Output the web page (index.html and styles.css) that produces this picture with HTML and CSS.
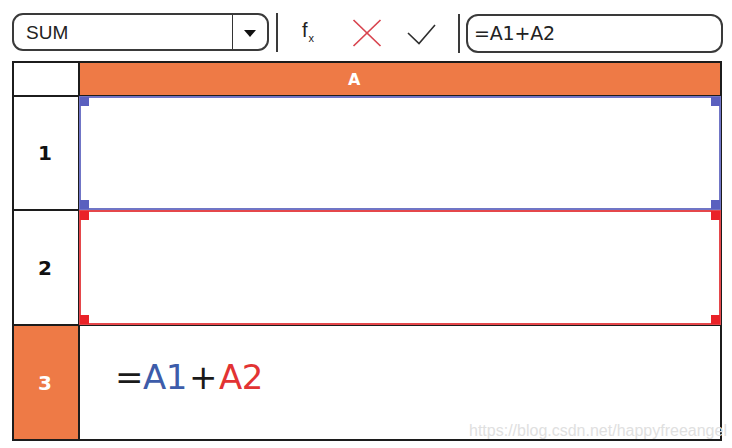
FILE: index.html
```html
<!DOCTYPE html>
<html>
<head>
<meta charset="utf-8">
<link rel="stylesheet" href="styles.css">
</head>
<body>
<div class="toolbar">
  <div class="namebox">
    <div class="name">SUM</div>
    <div class="drop"><span class="tri"></span></div>
  </div>
  <div class="sep sep1"></div>
  <div class="fx">f<span class="sub">x</span></div>
  <svg class="cancel" width="30" height="28" viewBox="0 0 30 28">
    <line x1="1.5" y1="1" x2="28.5" y2="27" stroke="#d8444f" stroke-width="1.7"/>
    <line x1="28.5" y1="1" x2="1.5" y2="27" stroke="#d8444f" stroke-width="1.7"/>
  </svg>
  <svg class="ok" width="32" height="22" viewBox="0 0 32 22">
    <polyline points="2,10 13,20.5 29,2" fill="none" stroke="#2e2e2e" stroke-width="1.6"/>
  </svg>
  <div class="sep sep2"></div>
  <div class="formula">=A1+A2</div>
</div>

<div class="sheet">
  <div class="cell corner"></div>
  <div class="cell colhead"><span class="colname">A</span></div>

  <div class="cell rowhead">1</div>
  <div class="cell data">
    <div class="sel sel-blue">
      <i class="h tl"></i><i class="h tr"></i><i class="h bl"></i><i class="h br"></i>
    </div>
  </div>

  <div class="cell rowhead">2</div>
  <div class="cell data">
    <div class="sel sel-red">
      <i class="h tl"></i><i class="h tr"></i><i class="h bl"></i><i class="h br"></i>
    </div>
  </div>

  <div class="cell rowhead active">3</div>
  <div class="cell data">
    <div class="expr"><span class="op">=</span><span class="ref1">A1</span><span class="op plus">+</span><span class="ref2">A2</span></div>
    <div class="mark">https://blog.csdn.net/happyfreeangel</div>
  </div>
</div>
</body>
</html>
```

FILE: styles.css
```css
html, body {
  margin: 0;
  padding: 0;
  background: #ffffff;
}

body {
  width: 732px;
  height: 448px;
  overflow: hidden;
  font-family: "Liberation Sans", Arial, sans-serif;
  color: #1a1a1a;
}

.toolbar {
  display: flex;
  align-items: flex-start;
  margin-top: 13px;
  height: 40px;
}

.namebox {
  margin-left: 12px;
  width: 257px;
  height: 38px;
  box-sizing: border-box;
  border: 2px solid #3a3a3a;
  border-radius: 11px;
  display: flex;
}

.name {
  flex: 1;
  padding-left: 12px;
  font-size: 19px;
  line-height: 35px;
  color: #222;
}

.drop {
  width: 34px;
  border-left: 1px solid #333;
  display: flex;
  align-items: center;
  justify-content: center;
}

.tri {
  width: 0;
  height: 0;
  border-left: 6px solid transparent;
  border-right: 6px solid transparent;
  border-top: 7px solid #111;
  margin-top: 2px;
}

.sep {
  width: 2px;
  height: 39px;
  background: #3a3a3a;
}

.sep1 {
  margin-left: 7px;
}

.fx {
  margin-left: 24px;
  width: 14px;
  margin-top: 5px;
  font-size: 20px;
  line-height: 24px;
  color: #222;
}

.fx .sub {
  font-size: 11px;
  vertical-align: -5px;
  margin-left: 1px;
}

.cancel {
  margin-left: 36px;
  margin-top: 6px;
}

.ok {
  margin-left: 24px;
  margin-top: 10px;
}

.sep2 {
  margin-left: 20px;
  margin-top: 1px;
}

.formula {
  margin-left: 6px;
  margin-top: 1px;
  width: 257px;
  height: 39px;
  box-sizing: border-box;
  border: 2px solid #3a3a3a;
  border-radius: 12px;
  padding-left: 6px;
  font-family: "DejaVu Sans", sans-serif;
  font-size: 19px;
  line-height: 35px;
  letter-spacing: -0.2px;
  color: #222;
}

.sheet {
  margin-top: 8px;
  margin-left: 12px;
  width: 710px;
  box-sizing: border-box;
  padding: 2px;
  background: #1c1c1c;
  display: grid;
  grid-template-columns: 64px 640px;
  grid-template-rows: 32px 112px 113px 113px;
  gap: 2px;
}

.cell {
  background: #ffffff;
  display: flex;
  align-items: center;
  justify-content: center;
  position: relative;
}

.colhead {
  background: #ee7a46;
  color: #ffffff;
  font-family: "DejaVu Sans", sans-serif;
  font-weight: bold;
  font-size: 16px;
  justify-content: flex-start;
}

.colname {
  margin-left: 268px;
}

.rowhead {
  font-family: "DejaVu Sans", sans-serif;
  font-weight: bold;
  font-size: 20px;
  color: #111;
  padding-right: 2px;
}

.rowhead.active {
  background: #ee7a46;
  color: #ffffff;
}

.data {
  justify-content: flex-start;
}

.sel {
  position: absolute;
  top: -1px;
  left: -1px;
  right: -1px;
  bottom: -1px;
  box-sizing: border-box;
  border: 2px solid;
}

.sel-blue {
  border-color: #7075c6;
}

.sel-red {
  border-color: #e5474b;
}

.h {
  position: absolute;
  width: 9px;
  height: 9px;
}

.sel-blue .h {
  background: #5a60bf;
}

.sel-red .h {
  background: #ea2228;
}

.h.tl { top: -1px; left: -1px; }
.h.tr { top: -1px; right: -1px; }
.h.bl { bottom: -1px; left: -1px; }
.h.br { bottom: -1px; right: -1px; }

.expr {
  margin-left: 35px;
  margin-bottom: 12px;
  font-family: "DejaVu Sans", sans-serif;
  font-size: 34px;
  letter-spacing: -0.5px;
}

.op {
  color: #1a1a1a;
}

.plus {
  margin: 0 2px;
}

.ref1 {
  color: #3d5caa;
}

.ref2 {
  color: #e23333;
}

.mark {
  position: absolute;
  left: 389px;
  bottom: -1px;
  white-space: nowrap;
  font-family: "Liberation Sans", Arial, sans-serif;
  font-size: 16px;
  color: #e0e0e0;
}
```
